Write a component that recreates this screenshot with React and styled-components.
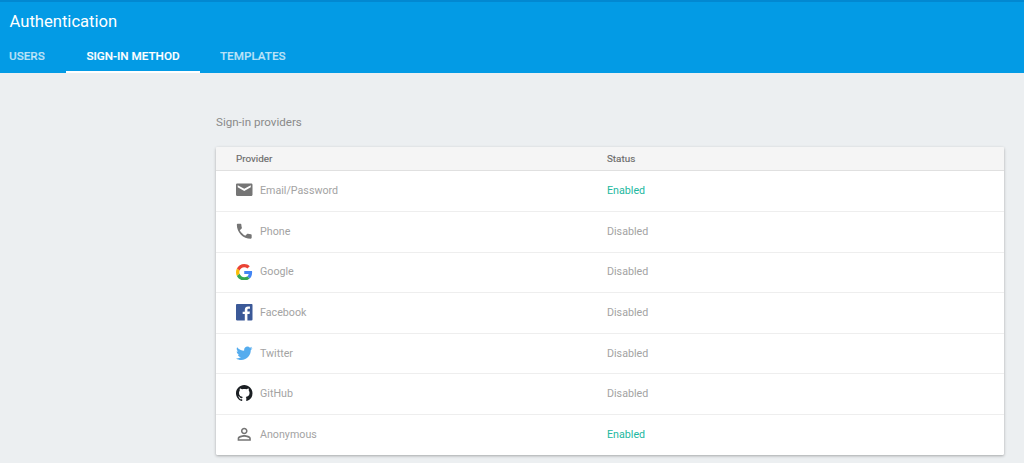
import React from "react";
import styled, { createGlobalStyle } from "styled-components";

const Global = createGlobalStyle`
  html, body { margin: 0; padding: 0; background: #eceff1; font-family: Roboto, "Liberation Sans", sans-serif; }
  body { height: 463px; overflow: hidden; }
`;
const Page = styled.div`display: flex; flex-direction: column; height: 463px; background: #eceff1;`;
const Header = styled.header`
  height: 73px; box-sizing: border-box; background: #039be5; border-top: 2px solid #0288d1;
  display: flex; flex-direction: column; justify-content: space-between;
`;
const Title = styled.h1`
  margin: 10px 0 0 9.5px; font-size: 16.6px; line-height: 20px; font-weight: 400; color: #fff;
`;
const Tabs = styled.nav`display: flex; height: 33px;`;
const Tab = styled.div`
  box-sizing: border-box; width: ${p => p.$w}px; padding-left: ${p => p.$pl}px; height: 33px; line-height: 32px;
  font-size: 11.7px; font-weight: 500; -webkit-text-stroke: .15px currentColor; white-space: nowrap;
  color: ${p => p.$active ? "#fff" : "rgba(255,255,255,.7)"};
  border-bottom: 2px solid ${p => p.$active ? "#fff" : "transparent"};
  ${p => p.$active ? "text-align:center; padding-left:0;" : ""}
`;
const Content = styled.main`padding: 42px 20px 0 216px;`;
const Section = styled.div`font-size: 11.6px; line-height: 14px; color: #8a8a8a; margin-bottom: 18px;`;
const Card = styled.div`
  background: #fff; box-shadow: 0 1px 3px rgba(0,0,0,.3); border-radius: 1.5px; overflow: hidden;
`;
const HeadRow = styled.div`
  display: grid; grid-template-columns: 371px 1fr; align-items: center; padding-left: 20px;
  height: 24.4px; background: #f5f5f5; border-bottom: 1px solid #e0e0e0; box-sizing: border-box;
  font-size: 9.9px; font-weight: 400; -webkit-text-stroke: .15px currentColor; color: #6b6b6b;
`;
const Row = styled.div`
  display: grid; grid-template-columns: 371px 1fr; align-items: center; padding: 0 0 1px 20px;
  height: 40.6px; box-sizing: border-box; border-bottom: 1px solid #eeeeee; font-size: 10.7px; color: #a3a3a3;
  &:last-child { border-bottom: 0; height: 40px; }
`;
const Provider = styled.div`display: flex; align-items: center; gap: 7.5px;`;
const IconBox = styled.svg`width: 16.5px; height: 16.5px; flex: none; display: block;`;
const Status = styled.span`color: ${p => p.$on ? "#22b8a0" : "#a3a3a3"};`;

const G = "#757575";
const icons = {
  mail: <IconBox viewBox="0 0 24 24"><path fill={G} d="M22 2H2C.9 2 0 2.900 0 4v16c0 1.100.9 2 2 2h20c1.100 0 2-.9 2-2V4c0-1.100-.9-2-2-2zm-.5 6L12 14 2.500 8V4.500L12 10.500 21.500 4.500V8z" transform="translate(0 .5) scale(1 .9)"/></IconBox>,
  phone: <IconBox viewBox="2 2 20 20"><path fill={G} d="M6.600 10.800c1.400 2.800 3.800 5.100 6.600 6.600l2.200-2.200c.3-.3.700-.4 1-.2 1.100.4 2.300.6 3.600.6.600 0 1 .4 1 1V20c0 .6-.4 1-1 1C10.600 21 3 13.400 3 4c0-.6.400-1 1-1h3.500c.6 0 1 .4 1 1 0 1.300.2 2.500.6 3.600.1.300 0 .7-.2 1l-2.300 2.200z"/></IconBox>,
  google: <IconBox viewBox="0 0 48 48">
    <path fill="#EA4335" d="M24 9.500c3.500 0 6.700 1.200 9.200 3.600l6.900-6.900C35.900 2.400 30.500 0 24 0 14.600 0 6.500 5.400 2.600 13.200l8 6.200C12.400 13.700 17.700 9.500 24 9.500z"/>
    <path fill="#4285F4" d="M46.900 24.500c0-1.600-.1-3.100-.4-4.500H24v9h12.900c-.6 3-2.200 5.500-4.700 7.200l7.700 6c4.500-4.200 7-10.300 7-17.700z"/>
    <path fill="#FBBC05" d="M10.500 28.600c-.5-1.400-.8-3-.8-4.600s.3-3.200.8-4.600l-8-6.200C.9 16.500 0 20.100 0 24s.9 7.500 2.600 10.800l7.900-6.200z"/>
    <path fill="#34A853" d="M24 48c6.500 0 11.900-2.100 15.900-5.800l-7.700-6c-2.100 1.400-4.900 2.300-8.200 2.300-6.300 0-11.600-4.200-13.500-9.900l-8 6.200C6.500 42.600 14.600 48 24 48z"/>
  </IconBox>,
  facebook: <IconBox viewBox="0 0 24 24"><path fill="#3b5998" d="M22.700 0H1.300C.6 0 0 .6 0 1.300v21.400C0 23.400.6 24 1.300 24H12.800v-9.300H9.700v-3.600h3.100V8.400c0-3.100 1.900-4.800 4.700-4.800 1.300 0 2.500.1 2.800.1v3.200h-1.900c-1.500 0-1.800.7-1.800 1.800v2.300h3.600l-.5 3.600h-3.100V24h6.100c.7 0 1.300-.6 1.300-1.300V1.300C24 .6 23.400 0 22.700 0z"/></IconBox>,
  twitter: <IconBox viewBox="0 0 24 24"><path fill="#55acee" d="M24 4.600c-.9.4-1.800.7-2.800.8 1-.6 1.800-1.600 2.200-2.700-1 .6-2 1-3.100 1.200C19.300 2.900 18 2.300 16.700 2.300c-2.700 0-4.900 2.200-4.900 4.900 0 .4 0 .8.100 1.100C7.700 8.100 4.100 6.100 1.700 3.100c-.4.700-.7 1.600-.7 2.500 0 1.700.9 3.200 2.200 4.100-.8 0-1.600-.2-2.200-.6v.1c0 2.400 1.700 4.400 3.900 4.800-.4.100-.8.200-1.300.2-.3 0-.6 0-.9-.1.600 2 2.400 3.400 4.600 3.400-1.700 1.300-3.800 2.100-6.100 2.100-.4 0-.8 0-1.200-.1 2.200 1.400 4.800 2.200 7.500 2.200 9.100 0 14-7.500 14-14v-.6c1-.7 1.800-1.600 2.500-2.500z"/></IconBox>,
  github: <IconBox viewBox="0 0 16 16"><path fill="#1b1f23" d="M8 0C3.580 0 0 3.580 0 8c0 3.540 2.290 6.530 5.470 7.590.4.070.55-.17.550-.38 0-.19-.01-.82-.01-1.490-2.010.37-2.530-.49-2.690-.94-.09-.23-.48-.94-.82-1.130-.28-.15-.68-.52-.01-.53.630-.01 1.080.58 1.230.82.720 1.210 1.870.87 2.330.66.070-.52.280-.87.510-1.070-1.780-.2-3.640-.89-3.640-3.950 0-.87.310-1.590.820-2.150-.08-.2-.36-1.020.08-2.120 0 0 .67-.21 2.200.82.640-.18 1.320-.27 2-.27s1.360.09 2 .27c1.530-1.040 2.200-.82 2.200-.82.440 1.100.16 1.920.08 2.120.51.560.82 1.270.82 2.150 0 3.070-1.870 3.750-3.650 3.950.29.25.54.730.54 1.480 0 1.070-.01 1.930-.01 2.200 0 .21.150.46.550.38A8.010 8.010 0 0 0 16 8c0-4.420-3.580-8-8-8z"/></IconBox>,
  person: <IconBox viewBox="0 0 24 24"><path fill={G} d="M12 5.900c1.160 0 2.100.94 2.100 2.100s-.94 2.100-2.100 2.100S9.900 9.160 9.900 8s.94-2.100 2.100-2.100m0 9c2.970 0 6.100 1.460 6.100 2.100v1.100H5.900V17c0-.64 3.130-2.100 6.100-2.100M12 4C9.790 4 8 5.790 8 8s1.790 4 4 4 4-1.790 4-4-1.790-4-4-4zm0 9c-2.670 0-8 1.340-8 4v3h16v-3c0-2.660-5.330-4-8-4z" transform="translate(-2.400 -2.400) scale(1.2)"/></IconBox>,
};

const rows = [
  ["mail", "Email/Password", true],
  ["phone", "Phone", false],
  ["google", "Google", false],
  ["facebook", "Facebook", false],
  ["twitter", "Twitter", false],
  ["github", "GitHub", false],
  ["person", "Anonymous", true],
];

export default function App() {
  return (
    <Page>
      <Global />
      <Header>
        <Title>Authentication</Title>
        <Tabs>
          <Tab $w={66} $pl={9}>USERS</Tab>
          <Tab $w={134} $active>SIGN-IN METHOD</Tab>
          <Tab $w={120} $pl={20}>TEMPLATES</Tab>
        </Tabs>
      </Header>
      <Content>
        <Section>Sign-in providers</Section>
        <Card>
          <HeadRow><span>Provider</span><span>Status</span></HeadRow>
          {rows.map(([icon, name, on]) => (
            <Row key={name}>
              <Provider>{icons[icon]}<span>{name}</span></Provider>
              <Status $on={on}>{on ? "Enabled" : "Disabled"}</Status>
            </Row>
          ))}
        </Card>
      </Content>
    </Page>
  );
}
